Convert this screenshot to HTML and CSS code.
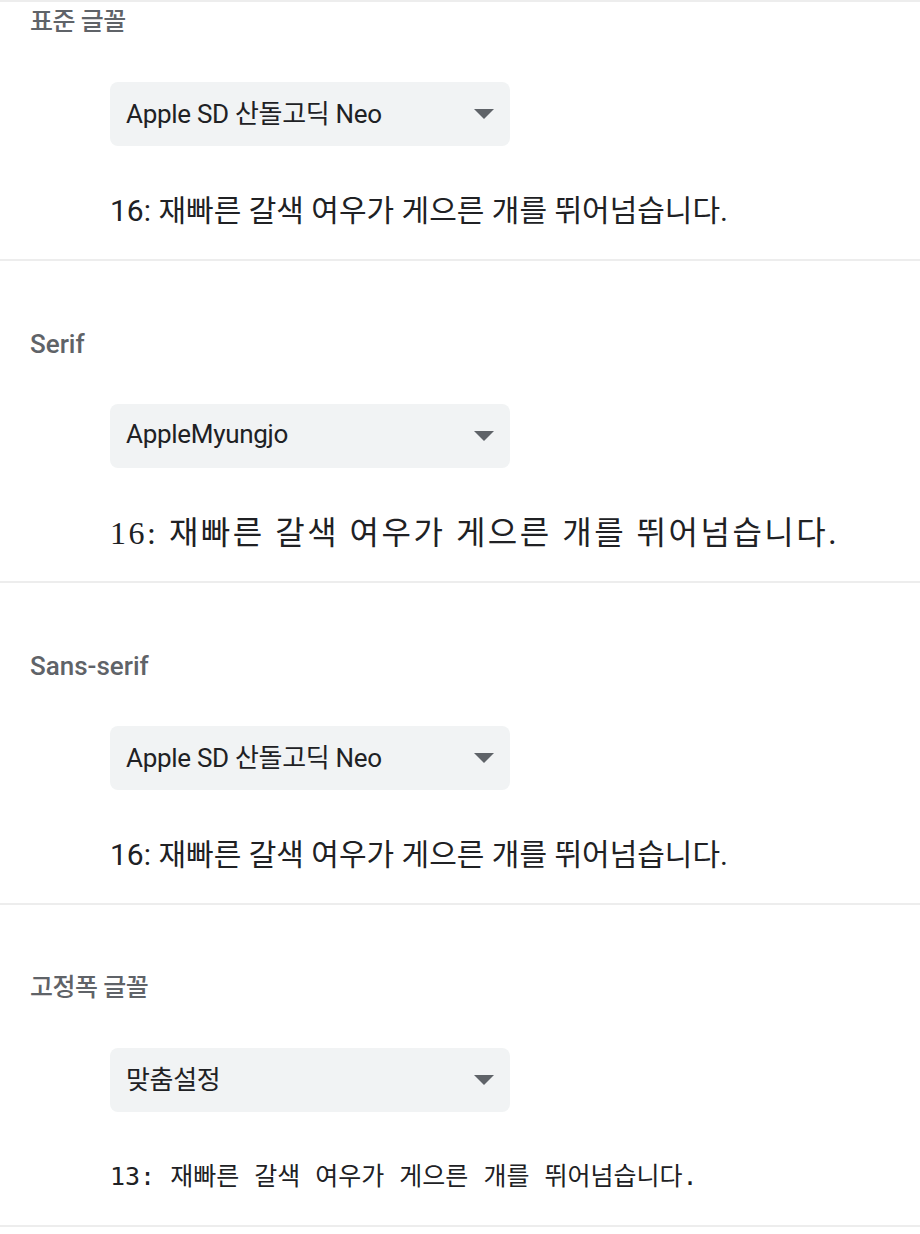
FILE: index.html
```html
<!DOCTYPE html>
<html lang="ko">
<head>
<meta charset="utf-8">
<link rel="stylesheet" href="styles.css">
</head>
<body>
<div class="page">
  <section class="font-section first">
    <div class="label">표준 글꼴</div>
    <div class="select"><span class="select-text">Apple SD 산돌고딕 Neo</span><span class="arrow"></span></div>
    <div class="sample sample-sans">16: 재빠른 갈색 여우가 게으른 개를 뛰어넘습니다.</div>
  </section>
  <section class="font-section">
    <div class="label label-latin">Serif</div>
    <div class="select"><span class="select-text">AppleMyungjo</span><span class="arrow"></span></div>
    <div class="sample sample-serif">16: 재빠른 갈색 여우가 게으른 개를 뛰어넘습니다.</div>
  </section>
  <section class="font-section">
    <div class="label label-latin">Sans-serif</div>
    <div class="select"><span class="select-text">Apple SD 산돌고딕 Neo</span><span class="arrow"></span></div>
    <div class="sample sample-sans">16: 재빠른 갈색 여우가 게으른 개를 뛰어넘습니다.</div>
  </section>
  <section class="font-section">
    <div class="label">고정폭 글꼴</div>
    <div class="select"><span class="select-text">맞춤설정</span><span class="arrow"></span></div>
    <div class="sample sample-mono">13: 재빠른 갈색 여우가 게으른 개를 뛰어넘습니다.</div>
  </section>
  <div class="end-line"></div>
</div>
</body>
</html>
```

FILE: styles.css
```css
html, body {
  margin: 0;
  padding: 0;
  background: #ffffff;
}

body {
  font-family: Roboto, "Noto Sans CJK KR", sans-serif;
  color: #202124;
}

.page {
  width: 920px;
  display: flex;
  flex-direction: column;
}

.font-section {
  border-top: 2px solid #ededed;
  padding: 63px 0 24px 0;
  display: flex;
  flex-direction: column;
}

.font-section.first {
  padding-top: 0;
}

.label {
  padding-left: 30px;
  height: 40px;
  line-height: 40px;
  font-size: 25px;
  font-weight: 500;
  color: #5f6368;
  letter-spacing: -0.5px;
}

.label-latin {
  font-size: 26px;
  letter-spacing: 0;
}

.select {
  margin: 40px 0 0 110px;
  width: 400px;
  height: 64px;
  box-sizing: border-box;
  background: #f1f3f4;
  border-radius: 8px;
  padding: 0 16px 5px 16px;
  display: flex;
  align-items: center;
  justify-content: space-between;
}

.select-text {
  font-size: 26px;
  color: #202124;
  letter-spacing: -0.3px;
}

.arrow {
  width: 0;
  height: 0;
  margin-top: 5px;
  border-left: 10px solid transparent;
  border-right: 10px solid transparent;
  border-top: 10px solid #5f6368;
}

.sample {
  margin: 41px 0 0 110px;
  height: 48px;
  line-height: 48px;
  white-space: nowrap;
  color: #202124;
}

.sample-sans {
  font-family: Roboto, "Noto Sans CJK KR", sans-serif;
  font-size: 30px;
  letter-spacing: 0;
}

.sample-serif {
  font-family: "Liberation Serif", "Noto Sans CJK KR", serif;
  font-size: 32px;
  letter-spacing: 2.5px;
  word-spacing: 0;
}

.sample-mono {
  font-family: "DejaVu Sans Mono", "Noto Sans CJK KR", monospace;
  font-size: 25px;
  letter-spacing: 0;
}

.end-line {
  border-top: 2px solid #ededed;
  height: 20px;
}
```
